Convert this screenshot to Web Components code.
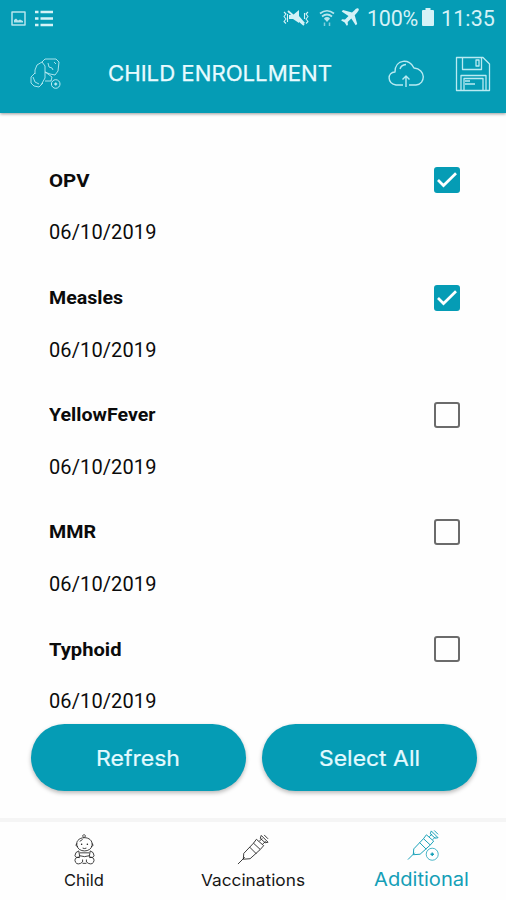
<!DOCTYPE html>
<html lang="en">
<head>
<meta charset="utf-8">
<title>Child Enrollment</title>
<style>
body{margin:0;background:#fff;overflow:hidden}
</style>
</head>
<body>
<enrollment-app></enrollment-app>
<script>
const define = (name, html, init) => customElements.define(name, class extends HTMLElement {
  constructor() {
    super();
    const t = document.createElement('template');
    t.innerHTML = html;
    this.attachShadow({mode: 'open'}).append(t.content.cloneNode(true));
  }
  connectedCallback() { if (init) init(this, this.shadowRoot); }
});

const syringe = `<path d="M2 32 9 25M8 21 18 10.500 25 17 14.500 26.500 7.500 27 8 21M14 14.500 21 21.500M18 10.500l3-4 7.500 6.500-3.500 4M24 8.500 27 5.500M27.500 11.500 30.500 8.500M26 2.500 33 9.500M26 2.500l-1 3 5 4.500 3-.5M29 2l4 4"/>`;
const icons = {
  picture: ['0 0 15 15', `<path d="M1 1h13v13H1Z" stroke-width="1.500"/><path d="M3 11.500V9l2-1.500 2 2 2-1 3 1.500v1.500Z" fill="currentColor" stroke="none"/>`],
  list: ['0 0 18 17', `<path d="M0 2h3.500M5.500 2H18M0 8.500h3.500M5.500 8.500H18M0 15h3.500M5.500 15H18" stroke-width="2.500"/>`],
  mute: ['0 0 26 18', `<path d="M6 6h4l6-5v6l6 7-2 1-4-3v2l-6-4H6Z" fill="currentColor" stroke="none"/><path d="M5 2 21 16" stroke-width="1.800"/><path d="m1 3 2 2-2 2.500 2 2.500-2 2.500 2 2M4.500 5v8M25 3l-2 2 2 2.500-2 2.500 2 2.500-2 2M21.500 4v6" stroke-width="1.100"/>`],
  wifi: ['0 0 16 18', `<path d="M1 4.500Q8-1 15 4.500M3 7.500q5-4 10 0M5.500 10q2.500-2 5 0" stroke-width="1.700"/><path d="M5.500 10h5l-2.500 3Z" fill="currentColor" stroke="none"/><path d="M5.500 13.500v3.500M10.500 17v-3.500" stroke-width="1.500" opacity=".7"/>`],
  plane: ['0 0 18 18', `<path d="M17.500.7c-1.200-1-2.800.2-4 1.500L11 4.500 2 2 .7 3.500 7.500 8 4 11.500l-3-.3-.8 1.200 3.500 2 2 3.400 1.200-.8-.2-3L10.300 10.500 14.700 17.300 16.200 16 13.700 7.200l2.300-2.500c1.300-1.300 2.400-2.900 1.500-4Z" fill="currentColor" stroke="none"/>`],
  battery: ['0 0 12 18', `<path d="M1 2h2.500V0h5v2H11q1 0 1 1v14q0 1-1 1H1q-1 0-1-1V3q0-1 1-1Z" fill="currentColor" stroke="none"/>`],
  crawl: ['0 0 31 31', `<g opacity=".9"><path d="M12 4 15 1H26l3 3-1 9-3 4-5-1-5-2M12 4 7 7 5 12v4M12 4l3 4v12l-4 7M18 5l1 4 3 1 1 2M24 4l2 2M15 14l3 2 4 3-1 4-6 0M5 15l-4 4 0 6 3 3 5 1 4-4M3 19l2 5 4 2"/></g><circle cx="25.700" cy="26" r="4.300"/><path d="M25.700 24.500v3M24.200 26h3" stroke-width="1.300"/>`],
  cloud: ['0 0 36 30', `<path d="M15 26H8C-1 25-1 13 7 13 7 0 22-1 26 9 38 10 38 25 28 26H21M18 28V17m-3.500 3.500L18 17l3.500 3.500M12 10q1-4 6-4.500" stroke-width="1.400"/>`],
  save: ['0 0 36 36', `<path d="M1.500 1.500H28l6.500 6.500v26.500h-33ZM7.500 1.500v12h19v-12M21 4h3v6h-3ZM6 34.500V19.500h25v15M9 34V22.500h19V34M10 25h5M10 28h10" stroke-width="1.300"/>`],
  baby: ['0 0 22 33', `<g opacity=".85"><path d="M10 4Q8 1 11 1q2 1 0 3M3 12C1 2 20 1 19 12c-1 8-15 8-16 0M3 10l-1 2 2 2M19 10l1 2-2 2M9 15q2 1 4 0M6 8l3-2M5 18q-4 1-4 5 1 3 5 1M17 18q4 1 4 5-1 3-5 1M5 18l1 6M17 18l-1 6M6 20h10M6 23q5 2 10 0M6 25q-5-1-5 3 1 5 6 3 3-1 2-4M16 25q5-1 5 3-1 5-6 3-3-1-2-4M9 31h4"/></g><circle cx="8" cy="11" r=".8" fill="currentColor" stroke="none"/><circle cx="14" cy="11" r=".8" fill="currentColor" stroke="none"/>`],
  syringe: ['0 0 35 34', `<g opacity=".85">${syringe}</g>`],
  syringePlus: ['0 0 35 34', syringe + `<circle cx="27" cy="26.500" r="7.500" fill="#fff" stroke="none"/><circle cx="27" cy="26.500" r="6.200" opacity=".8"/><path d="M27 24.700v3.600M25.200 26.500h3.600" stroke-width="1.400"/>`]
};

define('line-icon', `<style>
  :host{display:block;flex:none}
  svg{display:block;width:100%;height:100%;fill:none;stroke:currentColor;stroke-width:1;stroke-linejoin:round}
</style><svg></svg>`, (el, root) => {
  const [box, art] = icons[el.getAttribute('name')];
  const svg = root.querySelector('svg');
  svg.setAttribute('viewBox', box);
  svg.innerHTML = art;
});

/* A text run set to an exact width: by letter spacing, or by widening the glyphs with "wide". */
define('fit-text', `<style>
  :host{display:block;white-space:nowrap;flex:none}
  span{display:inline-block;transform-origin:0 50%}
</style><span></span>`, (el, root) => {
  const s = root.querySelector('span');
  s.textContent = el.getAttribute('label');
  const want = +el.getAttribute('width');
  const have = s.getBoundingClientRect().width;
  if (el.hasAttribute('wide')) {
    el.style.width = want + 'px';
    s.style.transform = `scaleX(${want / have})`;
  } else {
    s.style.letterSpacing = (want - have) / s.textContent.length + 'px';
  }
});

define('status-bar', `<style>
  :host{display:flex;align-items:center;height:36px;padding:0 11px 0 11px;color:#d5f2f7;font:21.500px/36px Roboto,sans-serif;box-sizing:border-box}
  .sp{flex:1}
</style>
<line-icon name="picture" style="width:15px;height:15px;opacity:.85"></line-icon>
<line-icon name="list" style="width:18px;height:17px;margin-left:9px"></line-icon>
<div class="sp"></div>
<line-icon name="mute" style="width:26px;height:18px"></line-icon>
<line-icon name="wifi" style="width:16px;height:18px;margin-left:10px;opacity:.85"></line-icon>
<line-icon name="plane" style="width:18px;height:18px;margin:0 8px 2px 6px"></line-icon>
<fit-text label="100%" width="51" style="margin-top:1px"></fit-text>
<line-icon name="battery" style="width:12px;height:18px;margin:0 7px 2px 4px"></line-icon>
<fit-text label="11:35" width="54" style="margin-top:1px"></fit-text>`);

define('app-header', `<style>
  :host{display:block;height:112.500px;background:#059cb5;box-shadow:0 1px 3px rgba(0,0,0,.4);position:relative}
  .bar{display:flex;align-items:center;height:75px;padding:0 15px 0 30px;color:#b9eaf2}
  fit-text{color:#e8fbff;font:400 21.500px/30px Inter,sans-serif;-webkit-text-stroke:.25px #e8fbff;margin:-1px auto 0 46.500px}
</style>
<status-bar></status-bar>
<div class="bar">
  <line-icon name="crawl" style="width:31px;height:31px"></line-icon>
  <fit-text wide label="CHILD ENROLLMENT" width="224"></fit-text>
  <line-icon name="cloud" style="width:36px;height:30px;margin-right:31px"></line-icon>
  <line-icon name="save" style="width:36px;height:36px"></line-icon>
</div>`);

define('check-box', `<style>
  :host{display:block;width:26px;height:26px;box-sizing:border-box;border:2px solid #6b6b6b;border-radius:3px}
  :host([checked]){background:#059cb5;border-color:#059cb5}
  svg{display:none;width:22px;height:22px}
  :host([checked]) svg{display:block}
</style><svg viewBox="0 0 22 22"><path d="m2 11 5.500 5.500L20 4.300" fill="none" stroke="#fff" stroke-width="2.700"/></svg>`);

define('vaccine-row', `<style>
  :host{display:block;height:117.200px;color:#0b0b0b}
  .top{display:flex;justify-content:space-between;align-items:center;height:26px}
  .name{font:700 18.500px/26px Roboto,sans-serif;margin-top:1px}
  .date{font:20px/26px Roboto,sans-serif;margin-top:26px}
</style>
<div class="top"><fit-text class="name"></fit-text><check-box></check-box></div>
<fit-text class="date"></fit-text>`, (el, root) => {
  const set = (sel, label, width, wide) => {
    const old = root.querySelector(sel), n = document.createElement('fit-text');
    n.className = old.className;
    n.setAttribute('label', label); n.setAttribute('width', width);
    n.toggleAttribute('wide', wide);
    old.replaceWith(n);
  };
  set('.name', el.getAttribute('name'), el.getAttribute('span'), true);
  set('.date', el.getAttribute('date'), 107.5, false);
  root.querySelector('check-box').toggleAttribute('checked', el.hasAttribute('checked'));
});

define('pill-button', `<style>
  :host{display:flex;align-items:center;justify-content:center;flex:1;height:67px;border-radius:34px;background:#059cb5;color:#e4faff;
    font:400 22px/30px Inter,sans-serif;-webkit-text-stroke:.2px #e4faff;box-shadow:0 2px 4px rgba(0,0,0,.28)}
</style><slot></slot>`);

define('tab-item', `<style>
  :host{display:flex;flex-direction:column;align-items:center;flex:1;color:#161616;font:400 16.500px/22px Inter,sans-serif}
  :host([active]){color:#159fb7;font-size:18.500px}
</style><slot></slot>`);

define('enrollment-app', `<style>
  :host{display:flex;flex-direction:column;width:506px;height:900px;background:#fefefe;overflow:hidden}
  app-header{flex:none}
  .list{height:611.500px;padding:54.900px 46px 0 49px;box-sizing:border-box;overflow:hidden;flex:none}
  .actions{display:flex;gap:16px;padding:0 29.500px 0 30.500px;height:94px;flex:none}
  .tabs{display:flex;border-top:4px solid #f5f5f5;height:82px;box-sizing:border-box}
</style>
<app-header></app-header>
<div class="list">
  <vaccine-row name="OPV" span="40.500" date="06/10/2019" checked></vaccine-row>
  <vaccine-row name="Measles" span="74" date="06/10/2019" checked></vaccine-row>
  <vaccine-row name="YellowFever" span="106.500" date="06/10/2019"></vaccine-row>
  <vaccine-row name="MMR" span="47" date="06/10/2019"></vaccine-row>
  <vaccine-row name="Typhoid" span="72.500" date="06/10/2019"></vaccine-row>
</div>
<div class="actions">
  <pill-button><fit-text wide label="Refresh" width="84"></fit-text></pill-button>
  <pill-button><fit-text wide label="Select All" width="101"></fit-text></pill-button>
</div>
<div class="tabs">
  <tab-item><line-icon name="baby" style="width:21px;height:33px;margin:11px 0 3px"></line-icon><fit-text wide label="Child" width="40"></fit-text></tab-item>
  <tab-item><line-icon name="syringe" style="width:34px;height:33px;margin:11px 0 3px"></line-icon><fit-text wide label="Vaccinations" width="104"></fit-text></tab-item>
  <tab-item active><line-icon name="syringePlus" style="width:34px;height:34px;margin:6px 0 6px 3px"></line-icon><fit-text wide label="Additional" width="95"></fit-text></tab-item>
</div>`);
</script>
</body>
</html>
